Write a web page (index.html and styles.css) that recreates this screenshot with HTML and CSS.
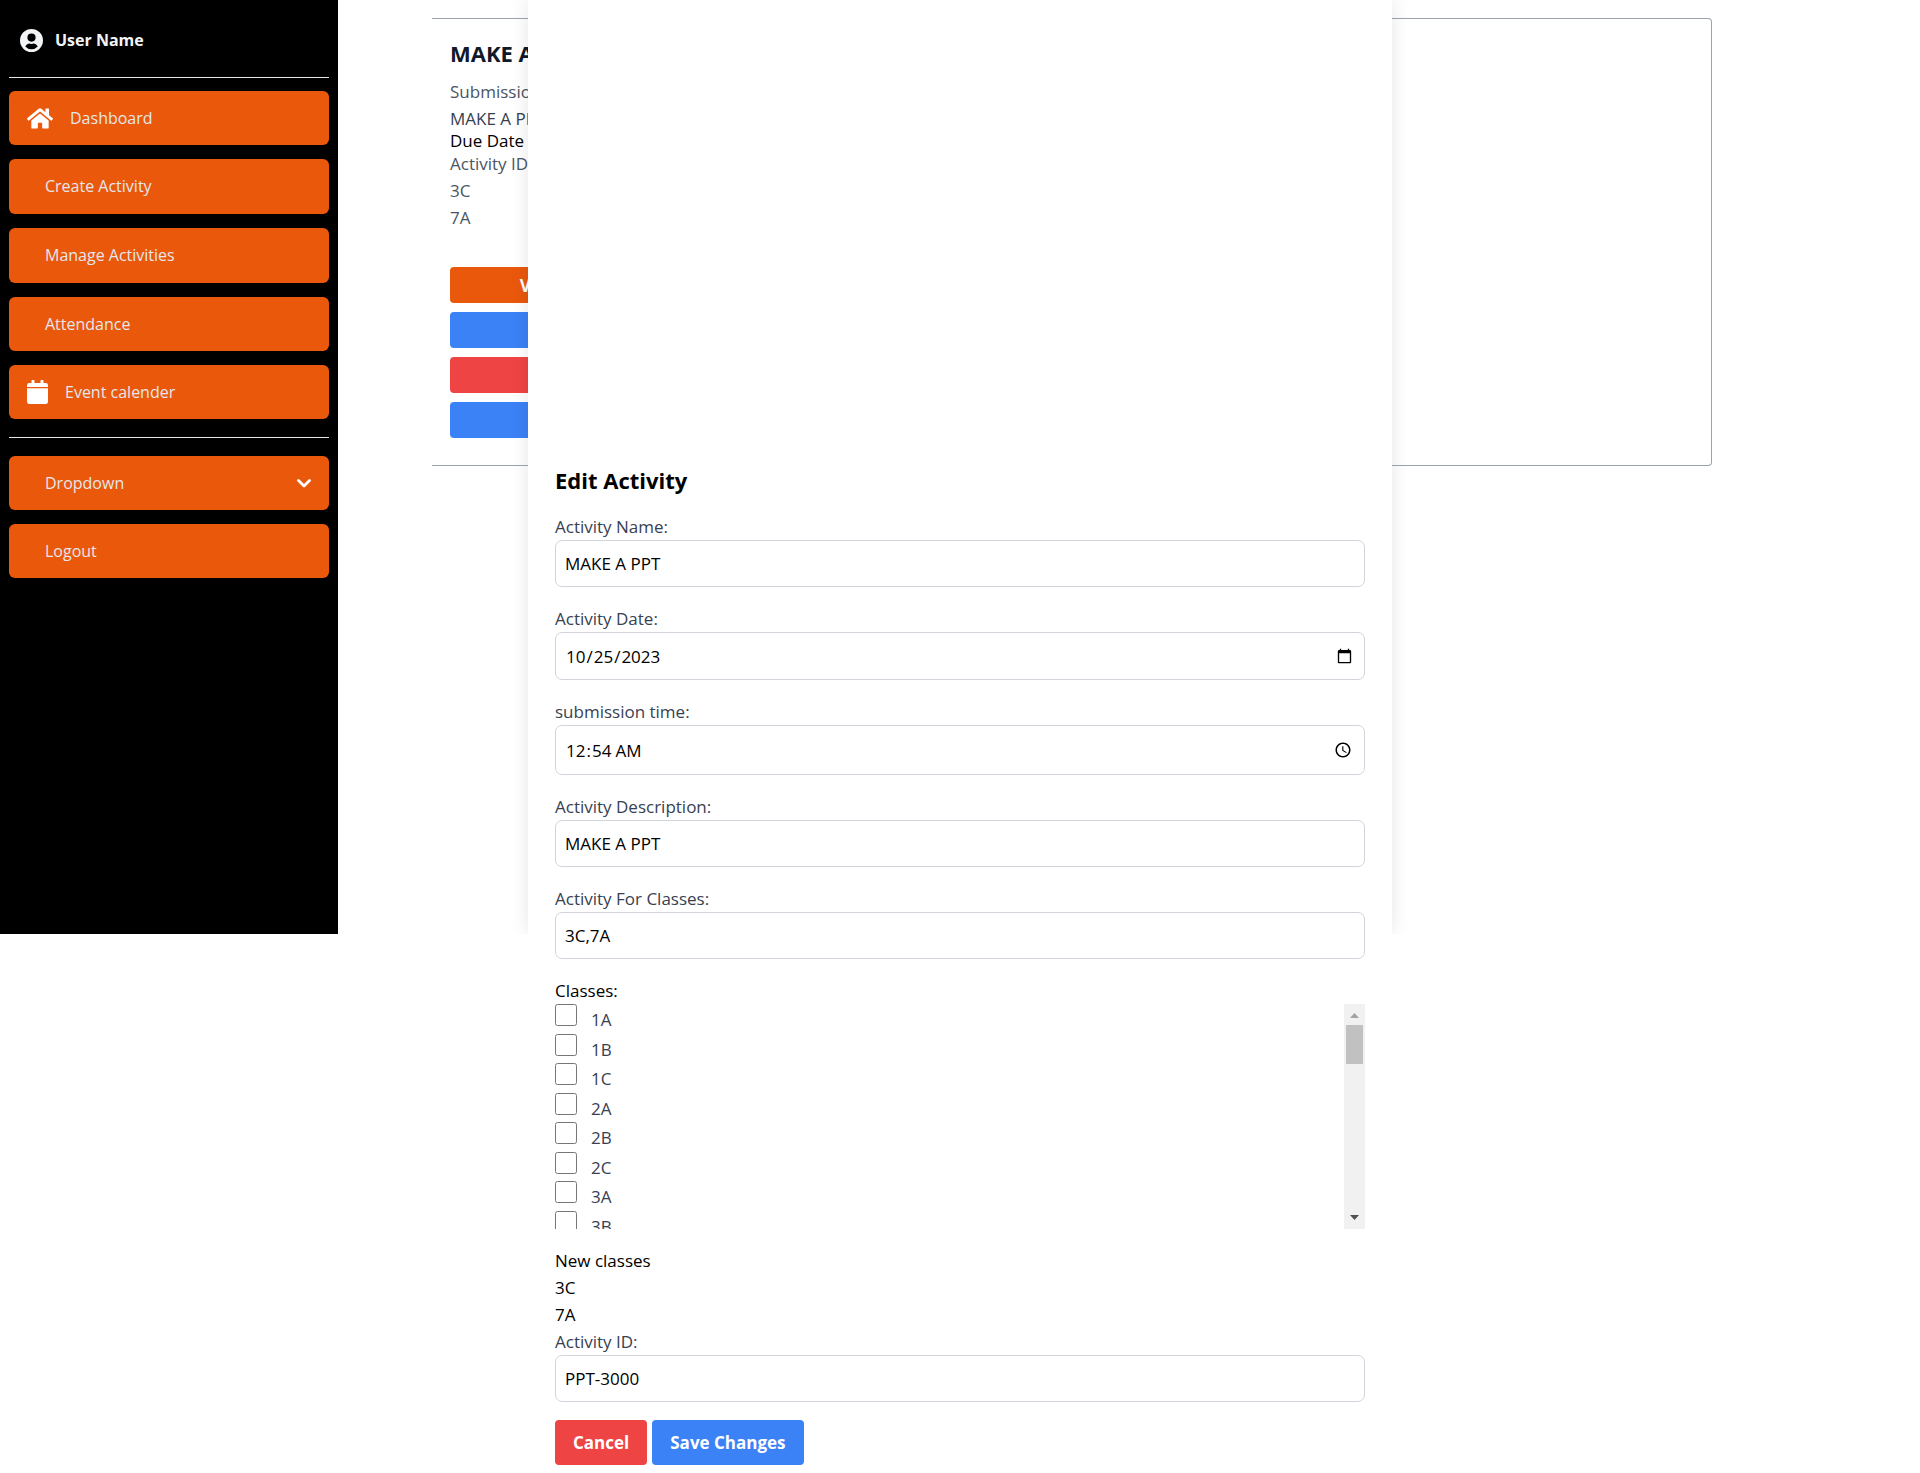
FILE: index.html
```html
<!DOCTYPE html>
<html lang="en-US">
<head>
  <meta charset="utf-8">
  <meta name="viewport" content="width=device-width, initial-scale=1">
  <title>Manage Activities</title>
  <link rel="stylesheet" href="styles.css">
</head>
<body>
  <div class="page">
    <div class="app">
      <aside class="sidebar">
        <div class="profile">
          <svg class="profile-icon" viewBox="0 0 24 24" aria-hidden="true"><path fill="currentColor" fill-rule="evenodd" d="M12 0a12 12 0 1 0 0 24 12 12 0 0 0 0-24zm0 4.600a4.300 4.300 0 1 1 0 8.600 4.300 4.300 0 0 1 0-8.600zm0 16.600a9.200 9.200 0 0 1-6.500-3c1.100-1.900 2.800-3 4.500-3 .4 0 1 .4 2 .4s1.600-.4 2-.4c1.700 0 3.400 1.100 4.500 3a9.200 9.200 0 0 1-6.500 3z"/></svg>
          <span>User Name</span>
        </div>
        <nav class="menu" aria-label="Main">
          <a class="menu-item with-icon" href="#dashboard">
            <svg class="home-icon" viewBox="0 0 576 448" aria-hidden="true"><path fill="currentColor" d="M280 116 96 268v164a16 16 0 0 0 16 16l112-1a16 16 0 0 0 16-16v-95a16 16 0 0 1 16-16h64a16 16 0 0 1 16 16v95a16 16 0 0 0 16 16l112 1a16 16 0 0 0 16-16V268L296 116a12 12 0 0 0-16 0zM572 219l-84-69V12a12 12 0 0 0-12-12h-56a12 12 0 0 0-12 12v72l-89-74a48 48 0 0 0-61 0L4 219a12 12 0 0 0-1 17l25 31a12 12 0 0 0 17 2L280 75a12 12 0 0 1 16 0l235 194a12 12 0 0 0 17-2l25-31a12 12 0 0 0-1-17z"/></svg>
            <span>Dashboard</span>
          </a>
          <a class="menu-item tall" href="#create">Create Activity</a>
          <a class="menu-item tall" href="#manage">Manage Activities</a>
          <a class="menu-item" href="#attendance">Attendance</a>
          <a class="menu-item with-icon" href="#calendar">
            <svg class="calendar-icon" viewBox="0 0 448 512" aria-hidden="true"><path fill="currentColor" d="M0 176h448v288a48 48 0 0 1-48 48H48a48 48 0 0 1-48-48zM448 148v-36a48 48 0 0 0-48-48h-48V12a12 12 0 0 0-12-12h-40a12 12 0 0 0-12 12v52H160V12a12 12 0 0 0-12-12h-40a12 12 0 0 0-12 12v52H48a48 48 0 0 0-48 48v36z"/></svg>
            <span>Event calender</span>
          </a>
        </nav>
        <div class="menu secondary">
          <button class="menu-item dropdown" type="button">
            <span>Dropdown</span>
            <svg class="chevron-icon" viewBox="0 0 14 9" aria-hidden="true"><path fill="none" stroke="currentColor" stroke-width="2.800" stroke-linecap="round" stroke-linejoin="round" d="M1.500 1.500 7 7l5.500-5.500"/></svg>
          </button>
          <button class="menu-item" type="button">Logout</button>
        </div>
      </aside>

      <main class="content">
        <article class="card">
          <h2 class="card-title">MAKE A PPT</h2>
          <p class="muted">Submission Date</p>
          <p class="muted dark">MAKE A PPT</p>
          <p class="due">Due Date</p>
          <p class="muted">Activity ID: PPT-3000</p>
          <p class="muted">3C</p>
          <p class="muted">7A</p>
          <div class="card-actions">
            <button class="action orange" type="button">View Task</button>
            <button class="action blue" type="button">Edit</button>
            <button class="action red" type="button">Delete</button>
            <button class="action blue" type="button">Copy</button>
          </div>
        </article>
      </main>
    </div>

    <section class="modal" role="dialog" aria-labelledby="modal-title">
      <form class="form">
        <h2 class="modal-title" id="modal-title">Edit Activity</h2>
        <div class="field">
          <label for="name">Activity Name:</label>
          <input class="input" id="name" type="text" value="MAKE A PPT">
        </div>
        <div class="field">
          <label for="date">Activity Date:</label>
          <input class="input date" id="date" type="date" value="2023-10-25">
        </div>
        <div class="field">
          <label for="time">submission time:</label>
          <input class="input time" id="time" type="time" value="00:54">
        </div>
        <div class="field">
          <label for="description">Activity Description:</label>
          <input class="input" id="description" type="text" value="MAKE A PPT">
        </div>
        <div class="field">
          <label for="classes">Activity For Classes:</label>
          <input class="input" id="classes" type="text" value="3C,7A">
        </div>
        <fieldset class="classes">
          <legend>Classes:</legend>
          <div class="class-box">
            <div class="class-list">
              <label class="class-row"><input type="checkbox"><span>1A</span></label>
              <label class="class-row"><input type="checkbox"><span>1B</span></label>
              <label class="class-row"><input type="checkbox"><span>1C</span></label>
              <label class="class-row"><input type="checkbox"><span>2A</span></label>
              <label class="class-row"><input type="checkbox"><span>2B</span></label>
              <label class="class-row"><input type="checkbox"><span>2C</span></label>
              <label class="class-row"><input type="checkbox"><span>3A</span></label>
              <label class="class-row"><input type="checkbox"><span>3B</span></label>
            </div>
            <div class="scrollbar" aria-hidden="true">
              <svg class="arrow up" viewBox="0 0 9 5"><path fill="currentColor" d="M0 5 4.500 0 9 5z"/></svg>
              <div class="thumb"></div>
              <svg class="arrow down" viewBox="0 0 9 5"><path fill="currentColor" d="M0 0h9L4.500 5z"/></svg>
            </div>
          </div>
        </fieldset>
        <div class="new-classes">
          <p>New classes</p>
          <p>3C</p>
          <p>7A</p>
        </div>
        <div class="field">
          <label for="activity-id">Activity ID:</label>
          <input class="input" id="activity-id" type="text" value="PPT-3000">
        </div>
        <div class="buttons">
          <button class="button red" type="button">Cancel</button>
          <button class="button blue" type="submit">Save Changes</button>
        </div>
      </form>
    </section>
  </div>
</body>
</html>
```
FILE: styles.css
```css
:root {
  --fold: 934px;
  --orange: #ea580c;
  --blue: #3b82f6;
  --red: #ef4444;
}

*,
*::before {
  box-sizing: border-box;
}

body {
  margin: 0;
  background: #fff;
  color: #000;
  font-family: "Open Sans", "Noto Sans", sans-serif;
  font-size: 17px;
  line-height: 27px;
}

h2,
p {
  margin: 0;
}

button,
input {
  font: inherit;
}

button {
  border: 0;
  cursor: pointer;
}

/* The dialog shares the app's grid cell, so it lies over it and still sets the page height */
.page {
  display: grid;
  grid-template-columns: 100%;
  align-items: start;
}

.app,
.modal {
  grid-area: 1 / 1;
}

.app {
  display: flex;
  align-items: flex-start;
}

/* Sidebar */

.sidebar {
  flex: none;
  width: 338px;
  min-height: var(--fold);
  padding: 0 9px;
  background: #000;
}

.profile {
  display: flex;
  align-items: center;
  gap: 12px;
  height: 78px;
  padding: 4px 0 0 11px;
  border-bottom: 1px solid #e5e7eb;
  color: #f3f4f6;
  font-size: 16px;
  font-weight: 700;
}

.profile-icon {
  width: 23px;
  height: 23px;
}

.menu {
  display: flex;
  flex-direction: column;
  gap: 14px;
  padding: 13px 0 18px;
}

.secondary {
  padding-top: 18px;
  border-top: 1px solid #e5e7eb;
}

.menu-item {
  display: flex;
  align-items: center;
  height: 54px;
  padding: 0 18px 0 36px;
  border-radius: 6px;
  background: var(--orange);
  color: #e5e7eb;
  font-size: 16px;
  text-align: left;
  text-decoration: none;
}

.menu-item.tall {
  height: 55px;
}

.menu-item.with-icon {
  gap: 17px;
  padding-left: 18px;
}

.menu-item.dropdown {
  justify-content: space-between;
}

.menu-item svg {
  color: #fff;
}

.home-icon {
  width: 26px;
  height: 21px;
}

.calendar-icon {
  width: 21px;
  height: 24px;
}

.chevron-icon {
  width: 14px;
  height: 9px;
}

/* Activity card */

.content {
  flex: 1;
  padding: 18px 208px 0 94px;
}

.card {
  padding: 18px 18px 27px;
  border: 1px solid #9ca3af;
  border-left: 0;
  border-radius: 0 4px 4px 0;
}

.card-title,
.modal-title {
  font-size: 22px;
  line-height: 32px;
}

.card-title {
  margin-bottom: 9px;
  color: #111827;
}

.muted {
  color: #4b5563;
}

.dark {
  color: #374151;
}

.due {
  line-height: 18px;
}

.card-actions {
  display: flex;
  flex-direction: column;
  gap: 9px;
  width: 224px;
  margin-top: 36px;
}

.action {
  height: 36px;
  padding: 0;
  border-radius: 4px;
  color: #fff;
  font-weight: 700;
}

.orange {
  background: var(--orange);
}

.blue {
  background: var(--blue);
}

.red {
  background: var(--red);
}

/* Edit dialog */

.modal {
  position: relative;
  z-index: 1;
  justify-self: center;
  width: 45%;
  padding: 464px 27px 8px;
  background: #fff;
}

/* The shadow stops at the first screen's lower edge */
.modal::before {
  content: "";
  position: absolute;
  z-index: -1;
  top: 0;
  left: 0;
  width: 100%;
  height: var(--fold);
  box-shadow: 0 0 18px rgba(0, 0, 0, 0.1);
  clip-path: inset(0 -18px);
}

.modal-title {
  margin-bottom: 17px;
}

.field {
  display: flex;
  flex-direction: column;
  margin-bottom: 18px;
  color: #374151;
}

.input {
  width: 100%;
  height: 47px;
  padding: 0 9px;
  border: 1px solid #d1d5db;
  border-radius: 7px;
  background: #fff;
  color: #000;
}

.input.date {
  height: 48px;
}

.input.time {
  height: 50px;
}

.classes {
  min-width: 0;
  margin: 0 0 18px;
  padding: 0;
  border: 0;
}

.classes legend {
  padding: 0;
}

.class-box {
  display: flex;
  height: 225px;
  overflow: hidden;
}

.class-list {
  display: grid;
  flex: 1;
  grid-template-rows: repeat(8, 1fr);
  height: 236px;
}

.class-row {
  display: flex;
  align-items: flex-start;
  gap: 14px;
  min-height: 0;
  color: #374151;
  line-height: 31px;
}

.class-row input {
  width: 22px;
  height: 22px;
  margin: 0;
}

.scrollbar {
  display: flex;
  flex-direction: column;
  align-items: center;
  width: 21px;
  background: #f1f1f1;
}

.arrow {
  width: 9px;
  height: 5px;
}

.arrow.up {
  margin: 9px 0 7px;
  color: #a3a3a3;
}

.arrow.down {
  margin: auto 0 9px;
  color: #505050;
}

.thumb {
  width: 17px;
  height: 39px;
  background: #c1c1c1;
}

.buttons {
  display: flex;
  gap: 5px;
}

.button {
  height: 45px;
  padding: 0 18px;
  border-radius: 4px;
  color: #fff;
  font-weight: 700;
}
```
